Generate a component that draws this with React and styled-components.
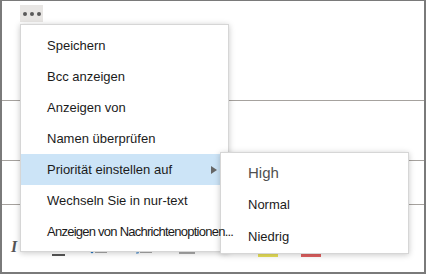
import React from "react";
import styled, { createGlobalStyle } from "styled-components";

const GlobalStyle = createGlobalStyle`
  body {
    margin: 0;
    background: #ffffff;
    font-family: "Liberation Sans", Arial, sans-serif;
  }
`;

const Frame = styled.div`
  position: relative;
  box-sizing: border-box;
  width: 426px;
  height: 274px;
  border: 2px solid #7a7a7a;
  border-top-width: 1px;
  display: flex;
  flex-direction: column;
  overflow: hidden;
  background: #ffffff;
`;

const TopBar = styled.div`
  height: 23px;
  box-sizing: border-box;
  padding: 4px 0 0 18px;
`;

const DotsButton = styled.div`
  width: 23px;
  height: 17px;
  background: #e8e6e4;
  display: flex;
  align-items: center;
  justify-content: center;
  gap: 3px;
`;

const Dot = styled.span`
  width: 4px;
  height: 4px;
  border-radius: 50%;
  background: #5a5a5a;
`;

const Field = styled.div`
  height: ${(p) => p.$h}px;
  box-sizing: border-box;
  border-bottom: 1px solid #a6a29e;
`;

const Toolbar = styled.div`
  flex: 1;
  display: flex;
  align-items: flex-start;
  padding-top: 35px;
`;

const ToolButton = styled.div`
  width: 42px;
  height: 18px;
  box-sizing: border-box;
  padding-left: ${(p) => p.$pad ?? 8}px;
  display: flex;
  align-items: flex-start;
`;

const ItalicGlyph = styled.span`
  font-family: "Liberation Serif", serif;
  font-style: italic;
  font-weight: bold;
  font-size: 16px;
  line-height: 14px;
  color: #555555;
`;

const UnderlineGlyph = styled.span`
  font-size: 13px;
  line-height: 14px;
  color: #555555;
  border-bottom: 2px solid #555555;
  width: 13px;
  text-align: center;
`;

const Menu = styled.div`
  position: absolute;
  left: 18px;
  top: 23px;
  width: 207px;
  padding: 5px 0 4px;
  background: #ffffff;
  border: 1px solid #d6d6d6;
  box-shadow: 0 1px 6px rgba(0, 0, 0, 0.22);
  z-index: 2;
`;

const MenuItem = styled.div`
  position: relative;
  height: 31px;
  box-sizing: border-box;
  padding: 0 11px 0 26px;
  display: flex;
  align-items: center;
  font-size: 13px;
  color: #1b1b1b;
  white-space: nowrap;
  background: ${(p) => (p.$active ? "#cce4f7" : "transparent")};
`;

const Label = styled.span`
  position: relative;
  z-index: 4;
  letter-spacing: ${(p) => (p.$tight ? "-0.75px" : "0")};
`;

const Arrow = styled.span`
  margin-left: auto;
  width: 0;
  height: 0;
  border-top: 4.5px solid transparent;
  border-bottom: 4.5px solid transparent;
  border-left: 6px solid #666666;
`;

const SubMenu = styled.div`
  position: absolute;
  left: 199px;
  top: -2px;
  width: 187px;
  padding: 3px 0 1px;
  background: #ffffff;
  border: 1px solid #d6d6d6;
  box-shadow: 0 1px 6px rgba(0, 0, 0, 0.22);
  z-index: 3;
`;

const SubItem = styled.div`
  height: 32px;
  box-sizing: border-box;
  padding-left: 27px;
  display: flex;
  align-items: center;
  font-size: ${(p) => (p.$large ? "15px" : "13px")};
  color: ${(p) => (p.$large ? "#505050" : "#1b1b1b")};
`;

const menuItems = [
  "Speichern",
  "Bcc anzeigen",
  "Anzeigen von",
  "Namen überprüfen",
  "Priorität einstellen auf",
  "Wechseln Sie in nur-text",
  "Anzeigen von Nachrichtenoptionen...",
];

function BulletsIcon() {
  return (
    <svg width="17" height="14" viewBox="0 0 17 14">
      <circle cx="2" cy="2" r="1.3" fill="#2b79c2" />
      <circle cx="2" cy="7" r="1.3" fill="#2b79c2" />
      <circle cx="2" cy="12" r="1.3" fill="#2b79c2" />
      <path d="M5 2h12M5 7h12M5 12h12" stroke="#555" strokeWidth="1.2" />
    </svg>
  );
}

function NumbersIcon() {
  return (
    <svg width="17" height="14" viewBox="0 0 17 14">
      <path
        d="M1 0.5h1.5v3M1 5.5h2.5l-2.5 3h2.5M1 10h2.5l-1.2 1.5 1.2 1.5h-2.5"
        stroke="#2b79c2"
        strokeWidth="0.9"
        fill="none"
      />
      <path d="M5 2h12M5 7h12M5 12h12" stroke="#555" strokeWidth="1.2" />
    </svg>
  );
}

function IndentIcon({ flip }) {
  return (
    <svg width="17" height="14" viewBox="0 0 17 14">
      <path d="M1 1h16M7 5h10M7 9h10M1 13h16" stroke="#555" strokeWidth="1.2" />
      <path
        d={flip ? "M5 4.5l-3.5 2.5 3.5 2.5z" : "M1.5 4.5l3.5 2.5-3.5 2.5z"}
        fill="#2b79c2"
      />
    </svg>
  );
}

function HighlightIcon() {
  return (
    <svg width="20" height="17" viewBox="0 0 20 17">
      <path d="M6 11l7-9 3 2-7 9h-3z" stroke="#555" strokeWidth="1.1" fill="none" />
      <rect x="0" y="14" width="20" height="3" fill="#e8e05a" />
    </svg>
  );
}

function FontColorIcon() {
  return (
    <svg width="20" height="17" viewBox="0 0 20 17">
      <path d="M5 12l5-11 5 11M7 8h6" stroke="#555" strokeWidth="1.3" fill="none" />
      <rect x="0" y="14" width="20" height="3" fill="#e06060" />
    </svg>
  );
}

function MoreIcon() {
  return (
    <svg width="17" height="14" viewBox="0 0 17 14">
      <path d="M2 7h13" stroke="#bbb" strokeWidth="1.2" />
    </svg>
  );
}

export default function App() {
  return (
    <>
      <GlobalStyle />
      <Frame>
        <TopBar>
          <DotsButton>
            <Dot />
            <Dot />
            <Dot />
          </DotsButton>
        </TopBar>
        <Field $h={77} />
        <Field $h={60} />
        <Field $h={44} />
        <Toolbar>
          <ToolButton $pad={9}>
            <ItalicGlyph>I</ItalicGlyph>
          </ToolButton>
          <ToolButton>
            <UnderlineGlyph>U</UnderlineGlyph>
          </ToolButton>
          <ToolButton $pad={4}>
            <BulletsIcon />
          </ToolButton>
          <ToolButton $pad={7}>
            <NumbersIcon />
          </ToolButton>
          <ToolButton>
            <IndentIcon flip />
          </ToolButton>
          <ToolButton>
            <IndentIcon />
          </ToolButton>
          <ToolButton $pad={4}>
            <HighlightIcon />
          </ToolButton>
          <ToolButton $pad={5}>
            <FontColorIcon />
          </ToolButton>
          <ToolButton>
            <MoreIcon />
          </ToolButton>
        </Toolbar>

        <Menu>
          {menuItems.map((label, i) => (
            <MenuItem key={label} $active={i === 4}>
              <Label $tight={i === 6}>{label}</Label>
              {i === 4 && (
                <>
                  <Arrow />
                  <SubMenu>
                    <SubItem $large>High</SubItem>
                    <SubItem>Normal</SubItem>
                    <SubItem>Niedrig</SubItem>
                  </SubMenu>
                </>
              )}
            </MenuItem>
          ))}
        </Menu>
      </Frame>
    </>
  );
}
